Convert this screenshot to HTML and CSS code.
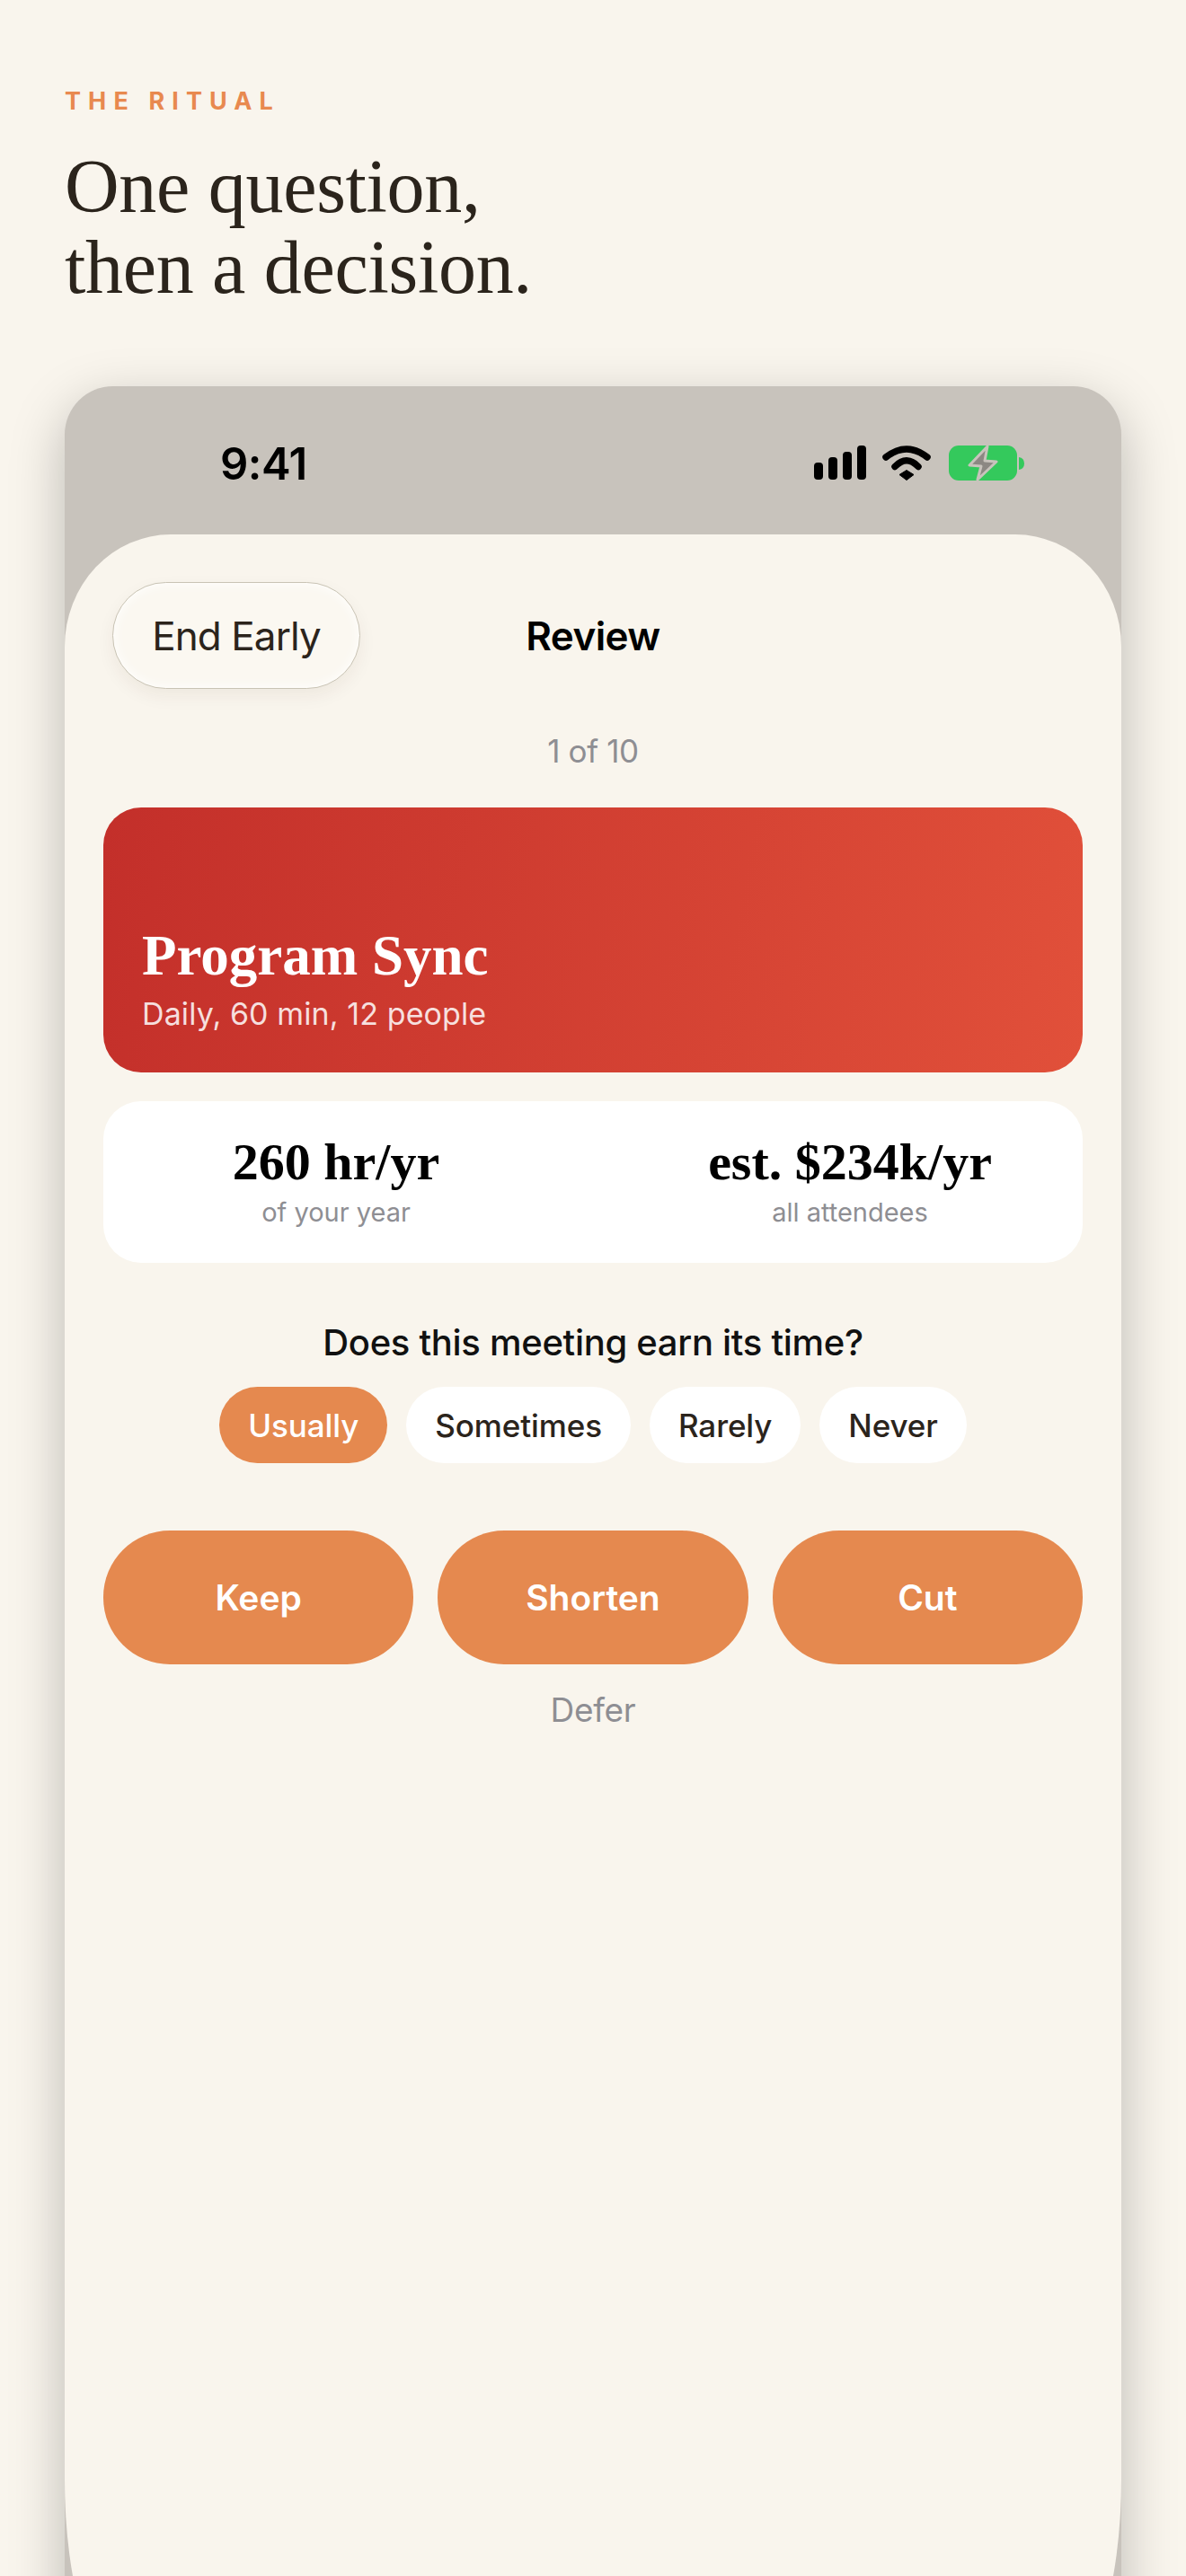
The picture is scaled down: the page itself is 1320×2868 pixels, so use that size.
FILE: index.html
```html
<!DOCTYPE html>
<html lang="en">
<head>
    <meta charset="UTF-8">
    <meta name="viewport" content="width=device-width, initial-scale=1.0">
    <title>The Ritual</title>
    <link rel="stylesheet" href="styles.css">
</head>
<body>
    <header class="intro">
        <p class="eyebrow">THE RITUAL</p>
        <h1 class="headline">One question,<br>then a decision.</h1>
    </header>

    <div class="stage">
        <div class="phone">
            <div class="status-bar">
                <span class="time">9:41</span>
                <div class="status-icons">
                    <svg class="signal" width="58" height="38" viewBox="0 0 58 38">
                        <rect x="0" y="19" width="10" height="19" rx="4"/>
                        <rect x="16" y="13" width="10" height="25" rx="4"/>
                        <rect x="32" y="7" width="10" height="31" rx="4"/>
                        <rect x="48" y="0" width="10" height="38" rx="4"/>
                    </svg>
                    <svg class="wifi" width="54" height="39" viewBox="0 0 54 39">
                        <path d="M4 13Q27 -5 50 13" fill="none" stroke="#000" stroke-width="7.5" stroke-linecap="round"/>
                        <path d="M14 23.5Q27 10 40 23.5" fill="none" stroke="#000" stroke-width="7.5" stroke-linecap="round"/>
                        <path d="M27 27.5L35 32.5L27 38.5L19 32.5Z" stroke="#000" stroke-width="1" stroke-linejoin="round"/>
                    </svg>
                    <svg class="battery" width="84" height="40" viewBox="0 0 84 40">
                        <rect x="0" y="0" width="76" height="39" rx="11" fill="#34c95c"/>
                        <path d="M78 13Q84 14 84 20Q84 26 78 27Z" fill="#34c95c"/>
                        <path d="M43 1L23 22L36 23L32 38L53 18L40 17Z" fill="#8c8883" stroke="#c8c3bc" stroke-width="3" stroke-linejoin="round"/>
                    </svg>
                </div>
            </div>

            <main class="sheet">
                <div class="nav-row">
                    <button class="end-btn">End Early</button>
                    <span class="nav-title">Review</span>
                </div>
                <p class="counter">1 of 10</p>

                <section class="meeting-card">
                    <h2 class="meeting-name">Program Sync</h2>
                    <p class="meeting-meta">Daily, 60 min, 12 people</p>
                </section>

                <section class="stats-card">
                    <div class="stat">
                        <div class="stat-value">260 hr/yr</div>
                        <div class="stat-label">of your year</div>
                    </div>
                    <div class="stat">
                        <div class="stat-value">est. $234k/yr</div>
                        <div class="stat-label">all attendees</div>
                    </div>
                </section>

                <p class="question">Does this meeting earn its time?</p>
                <div class="chips">
                    <button class="chip chip-active">Usually</button>
                    <button class="chip">Sometimes</button>
                    <button class="chip">Rarely</button>
                    <button class="chip">Never</button>
                </div>

                <div class="actions">
                    <button class="action">Keep</button>
                    <button class="action">Shorten</button>
                    <button class="action">Cut</button>
                </div>
                <p class="defer">Defer</p>
            </main>
        </div>
    </div>
</body>
</html>
```

FILE: styles.css
```css
* { box-sizing: border-box; }
html, body { margin: 0; padding: 0; }
body { background: #f9f5ed; font-family: Inter, "Liberation Sans", sans-serif; color: #2b241c; }
p, h1, h2 { margin: 0; }
button { font-family: inherit; border: none; padding: 0; }

.intro { height: 343px; padding: 97px 72px 0; }
.eyebrow { font-size: 27px; line-height: 32px; font-weight: 700; letter-spacing: 8.1px; color: #e8894f; }
.headline { margin-top: 34px; font-family: "Liberation Serif", serif; font-size: 84px; line-height: 90px; font-weight: 400; letter-spacing: -0.3px; color: #2b241c; }

/* the phone runs off the bottom of the page, so the stage clips it */
.stage { height: 2525px; padding: 87px 72px 0; overflow: hidden; }
.phone { height: 2600px; background: #c8c3bc; border-radius: 54px 54px 0 0; box-shadow: 0 20px 60px rgba(0, 0, 0, 0.25); }

.status-bar { height: 165px; display: flex; justify-content: space-between; align-items: center; padding: 8px 108px 0 173px; }
.time { font-size: 49px; font-weight: 600; letter-spacing: -0.5px; color: #000; }
.status-icons { display: flex; align-items: flex-start; gap: 18px; margin-top: -2px; }
.wifi { margin-right: 2px; }

.sheet { height: 2385px; padding: 53px 43px 0; background: #f9f5ed; border-radius: 118px 118px 70px 70px / 125px 125px 220px 220px; }

.nav-row { display: grid; grid-template-columns: 1fr auto 1fr; align-items: center; }
.end-btn { justify-self: start; margin-left: 10px; width: 276px; height: 119px; border: 1px solid #c9c4b5; border-radius: 60px; background: #fbf8f1; box-shadow: 0 8px 20px rgba(60, 40, 20, 0.06), inset 0 0 14px #fff; font-size: 44px; letter-spacing: -0.9px; color: #2b241c; }
.nav-title { font-size: 44px; font-weight: 600; letter-spacing: -0.6px; color: #000; }

.counter { margin-top: 47px; text-align: center; font-size: 35px; line-height: 44px; letter-spacing: -0.4px; color: #8e8e93; }

.meeting-card { margin-top: 41px; height: 295px; padding: 0 43px 43px; display: flex; flex-direction: column; justify-content: flex-end; border-radius: 42px; background: linear-gradient(100deg, #c32f2a, #e1503a); color: #fff; }
.meeting-name { font-family: "Liberation Serif", serif; font-size: 63px; line-height: 70px; font-weight: 700; }
.meeting-meta { margin-top: 8px; font-size: 34px; line-height: 44px; letter-spacing: 0.1px; color: rgba(255, 255, 255, 0.85); }

.stats-card { margin-top: 32px; height: 180px; padding: 34px 36px 0; display: grid; grid-template-columns: 1fr 1fr; column-gap: 126px; border-radius: 42px; background: #fff; text-align: center; }
.stat-value { font-family: "Liberation Serif", serif; font-size: 58px; line-height: 68px; font-weight: 700; color: #000; white-space: nowrap; }
.stat-label { margin-top: 4px; font-size: 29px; line-height: 36px; color: #8e8e93; }

.question { margin-top: 64px; text-align: center; font-size: 40px; line-height: 50px; font-weight: 500; letter-spacing: -0.3px; color: #111; }

.chips { margin-top: 24px; display: flex; justify-content: center; gap: 21px; }
.chip { height: 85px; padding: 0 32px; border-radius: 43px; background: #fff; font-size: 35px; font-weight: 500; letter-spacing: -0.1px; color: #2b241c; }
.chip-active { background: #e5894f; color: #fff; }

.actions { margin-top: 75px; display: grid; grid-template-columns: repeat(3, 1fr); gap: 27px; }
.action { height: 149px; border-radius: 74px; background: #e5894f; font-size: 39px; font-weight: 600; color: #fff; }

.defer { margin-top: 28px; text-align: center; font-size: 37px; line-height: 46px; letter-spacing: -0.3px; color: #8e8e93; }
```
